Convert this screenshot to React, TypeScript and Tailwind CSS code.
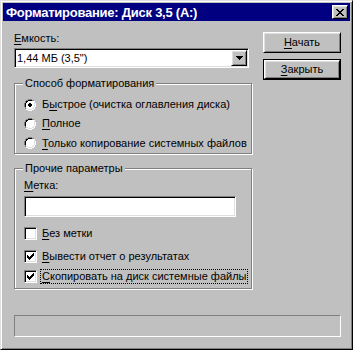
import React from "react";

const raised =
  "border border-t-white border-l-white border-r-black border-b-black shadow-[inset_1px_1px_0_#dfdfdf,inset_-1px_-1px_0_#808080]";
const sunken =
  "border border-t-[#808080] border-l-[#808080] border-r-white border-b-white shadow-[inset_1px_1px_0_#000,inset_-1px_-1px_0_#dfdfdf]";

function U({ children }: { children: React.ReactNode }) {
  return <span className="underline underline-offset-2 decoration-1">{children}</span>;
}

function Radio({ checked }: { checked?: boolean }) {
  return (
    <svg width="12" height="12" viewBox="0 0 12 12" className="shrink-0" shapeRendering="crispEdges">
      <path d="M4 0h4v1h2v1h1v2h1v4h-1v2h-1v1h-2v1h-4v-1h-2v-1h-1v-2h-1v-4h1v-2h1v-1h2z" fill="#fff" />
      <path d="M4 0h4v1h2v1h-2v-1h-4v1h-2v2h-1v4h1v2h-1v-2h-1v-4h1v-2h1v-1h2z" fill="#808080" />
      <path d="M4 1h4v1h-4v1h-1v1h-1v4h-1v-4h1v-2h2z" fill="#000" />
      <path d="M10 3h1v5h-1v2h-2v1h-4v-1h-2v-1h2v1h4v-1h1v-1h1z" fill="#dfdfdf" />
      {checked && <path d="M5 4h2v1h1v2h-1v1h-2v-1h-1v-2h1z" fill="#000" />}
    </svg>
  );
}

function CheckMark() {
  return (
    <svg width="7" height="7" viewBox="0 0 7 7" className="absolute left-[2px] top-[2px]" shapeRendering="crispEdges">
      <path d="M6 0h1v3h-1v1h-1v1h-1v1h-1v1h-1v-1h-1v-1h-1v-3h1v1h1v1h1v-1h1v-1h1z" fill="#000" />
    </svg>
  );
}

function CheckBox({ checked }: { checked?: boolean }) {
  return (
    <div className={`w-[13px] h-[13px] bg-white ${sunken} shrink-0 relative`}>
      {checked && <CheckMark />}
    </div>
  );
}

export default function App() {
  return (
    <div
      className="w-[353px] h-[350px] bg-[#c0c0c0] text-black text-[11px] leading-[13px] border border-t-[#dfdfdf] border-l-[#dfdfdf] border-r-black border-b-black shadow-[inset_1px_1px_0_#fff,inset_-1px_-1px_0_#808080] p-[2px] flex flex-col"
      style={{ fontFamily: '"Liberation Sans", Arial, sans-serif' }}
    >
      {/* Title bar */}
      <div className="h-[18px] bg-[#000080] flex items-center justify-between pl-[3px] pr-[2px]">
        <span className="text-white font-bold text-[13px] leading-[15px] tracking-[-0.25px]">Форматирование: Диск 3,5 (A:)</span>
        <div className={`w-[16px] h-[14px] bg-[#c0c0c0] ${raised} flex items-center justify-center`}>
          <svg width="8" height="7" viewBox="0 0 8 7" shapeRendering="crispEdges">
            <path d="M0 0h2v1h1v1h2v-1h1v-1h2v1h-1v1h-1v1h-1v1h1v1h1v1h1v1h-2v-1h-1v-1h-2v1h-1v1h-2v-1h1v-1h1v-1h1v-1h-1v-1h-1v-1h-1z" fill="#000" />
          </svg>
        </div>
      </div>

      {/* Content */}
      <div className="flex pl-[11px] pt-[11px]">
        <div className="w-[238px] flex flex-col">
          <div className="h-[16px] leading-[13px]"><U>Е</U>мкость:</div>
          <div className={`w-[235px] h-[20px] bg-white ${sunken} flex items-center justify-between pl-[2px] pr-[1px]`}>
            <span>1,44 МБ (3,5")</span>
            <div className={`w-[16px] h-[16px] bg-[#c0c0c0] ${raised} flex items-center justify-center`}>
              <svg width="7" height="4" viewBox="0 0 7 4" shapeRendering="crispEdges">
                <path d="M0 0h7v1h-1v1h-1v1h-1v1h-1v-1h-1v-1h-1v-1h-1z" fill="#000" />
              </svg>
            </div>
          </div>

          {/* Group 1 */}
          <div className="relative mt-[15px] h-[71px] border border-[#808080] shadow-[inset_1px_1px_0_#fff,1px_1px_0_#fff] pl-[9px] pt-[11px] flex flex-col">
            <span className="absolute left-[8px] top-[-7px] bg-[#c0c0c0] px-[2px]">Способ форматирования</span>
            <div className="h-[20px] flex items-center gap-[6px]">
              <Radio checked />
              <span>Б<U>ы</U>строе (очистка оглавления диска)</span>
            </div>
            <div className="h-[20px] flex items-center gap-[6px]">
              <Radio />
              <span><U>П</U>олное</span>
            </div>
            <div className="h-[20px] flex items-center gap-[6px]">
              <Radio />
              <span><U>Т</U>олько копирование системных файлов</span>
            </div>
          </div>

          {/* Group 2 */}
          <div className="relative mt-[14px] h-[121px] border border-[#808080] shadow-[inset_1px_1px_0_#fff,1px_1px_0_#fff] pl-[9px] pt-[10px] flex flex-col">
            <span className="absolute left-[8px] top-[-7px] bg-[#c0c0c0] px-[2px]">Прочие параметры</span>
            <div className="h-[17px]"><U>М</U>етка:</div>
            <div className={`w-[212px] h-[21px] bg-white ${sunken}`} />
            <div className="mt-[6px] h-[21px] flex items-center gap-[5px]">
              <CheckBox />
              <span><U>Б</U>ез метки</span>
            </div>
            <div className="mt-[2px] h-[21px] flex items-center gap-[5px]">
              <CheckBox checked />
              <span><U>В</U>ывести отчет о результатах</span>
            </div>
            <div className="h-[18px] flex items-center gap-[4px]">
              <CheckBox checked />
              <span className="outline outline-1 outline-dotted outline-black px-[1px] leading-[13px]"><U>С</U>копировать на диск системные файлы</span>
            </div>
          </div>
        </div>

        <div className="ml-[11px] flex flex-col">
          <div className={`w-[78px] h-[21px] ${raised} flex items-center justify-center`}>
            <span><U>Н</U>ачать</span>
          </div>
          <div className="mt-[6px] w-[78px] h-[21px] border border-black flex">
            <div className={`flex-1 ${raised} flex items-center justify-center`}>
              <span><U>З</U>акрыть</span>
            </div>
          </div>
        </div>
      </div>

      {/* Status bar */}
      <div className="ml-[11px] mt-[26px] w-[327px] h-[22px] border border-t-[#808080] border-l-[#808080] border-r-white border-b-white" />
    </div>
  );
}
